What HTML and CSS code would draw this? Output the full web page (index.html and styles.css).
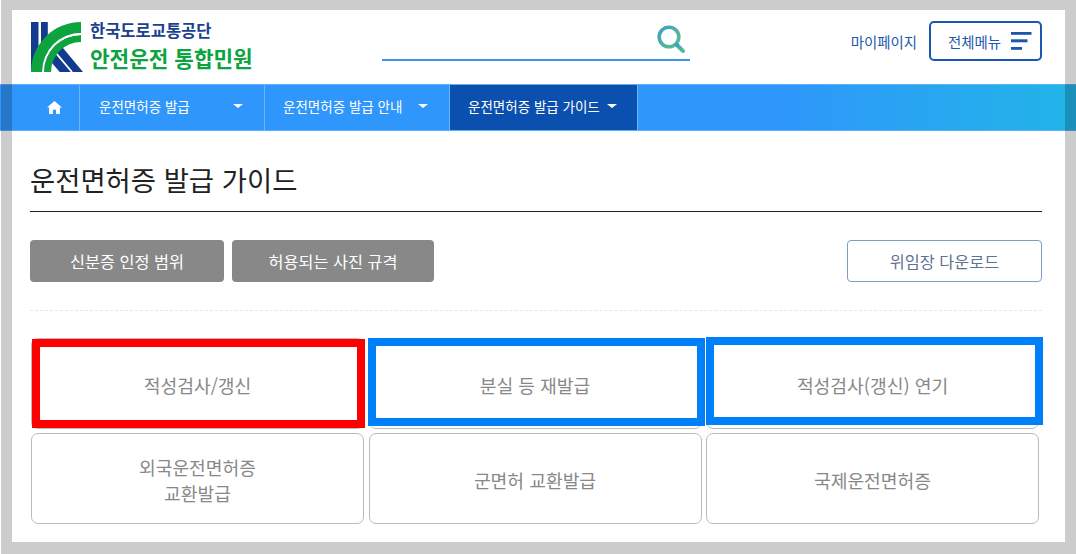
FILE: index.html
```html
<!DOCTYPE html>
<html lang="ko">
<head>
<meta charset="utf-8">
<title>운전면허증 발급 가이드</title>
<link rel="stylesheet" href="styles.css">
</head>
<body>
<div class="page">
  <header class="top">
    <a class="brand">
      <svg class="logo" viewBox="0 0 52 50" width="52" height="50">
        <rect x="0" y="0" width="7.500" height="50" fill="#123a8e"/>
        <rect x="10" y="0" width="6.800" height="50" fill="#123a8e"/>
        <polygon points="15,34 27,20 52,50 28.700,50" fill="#123a8e"/>
        <path d="M22 27.600L41 50" stroke="#fff" stroke-width="1.800" fill="none"/>
        <path d="M0 50A50 50 0 0 1 50 0V11A39 39 0 0 0 11 50Z" fill="#0da33f"/>
        <path d="M13 50A37 37 0 0 1 50 13V20A30 30 0 0 0 20 50Z" fill="#0da33f"/>
        <path d="M11 50A39 39 0 0 1 50 11V13A37 37 0 0 0 13 50Z" fill="#fff"/>
      </svg>
      <span class="brand-text">
        <span class="brand-org">한국도로교통공단</span>
        <span class="brand-svc">안전운전 통합민원</span>
      </span>
    </a>
    <div class="search">
      <svg class="search-icon" viewBox="0 0 28 28" width="28" height="28">
        <defs><linearGradient id="sg" x1="0" y1="0" x2="1" y2="1"><stop offset="0" stop-color="#3f9fc6"/><stop offset="1" stop-color="#58c08c"/></linearGradient></defs>
        <circle cx="12" cy="12" r="9.800" fill="none" stroke="url(#sg)" stroke-width="3.600"/>
        <path d="M19.500 19.500L26 26" stroke="url(#sg)" stroke-width="4" stroke-linecap="round"/>
      </svg>
    </div>
    <div class="util">
      <a class="mypage">마이페이지</a>
      <a class="allmenu">전체메뉴
        <svg class="burger" viewBox="0 0 21 18" width="21" height="18">
          <rect x="0" y="0" width="20.500" height="2.800" fill="#1b57ae"/>
          <rect x="0" y="7.300" width="16.500" height="3" fill="#1b57ae"/>
          <rect x="0" y="15" width="11" height="2.800" fill="#1b57ae"/>
        </svg>
      </a>
    </div>
  </header>

  <nav class="gnb">
    <a class="gnb-home">
      <svg viewBox="0 0 16 14" width="15" height="13"><path d="M8 0L16 7H13.800V14H9.700V9.500H6.300V14H2.200V7H0Z" fill="#fff"/></svg>
    </a>
    <a class="gnb-item gnb-first">운전면허증 발급<i class="caret"></i></a>
    <a class="gnb-item">운전면허증 발급 안내<i class="caret"></i></a>
    <a class="gnb-item is-active">운전면허증 발급 가이드<i class="caret"></i></a>
  </nav>

  <main class="content">
    <h1 class="title">운전면허증 발급 가이드</h1>
    <div class="actions">
      <a class="btn btn-gray btn-id">신분증 인정 범위</a>
      <a class="btn btn-gray btn-photo">허용되는 사진 규격</a>
      <a class="btn btn-line">위임장 다운로드</a>
    </div>
    <div class="cards">
      <a class="card">적성검사/갱신</a>
      <a class="card">분실 등 재발급</a>
      <a class="card">적성검사(갱신) 연기</a>
      <a class="card">외국운전면허증<br>교환발급</a>
      <a class="card">군면허 교환발급</a>
      <a class="card">국제운전면허증</a>
    </div>
  </main>

  <div class="mark mark-red"></div>
  <div class="mark mark-blue-a"></div>
  <div class="mark mark-blue-b"></div>
  <div class="frame"></div>
</div>
</body>
</html>
```

FILE: styles.css
```css
* { box-sizing: border-box; }
html, body { margin: 0; padding: 0; background: #fff; }
body { font-family: "Noto Sans CJK KR", "Noto Sans", sans-serif; color: #222; }
a { color: inherit; text-decoration: none; }

.page { position: relative; width: 1076px; height: 554px; overflow: hidden; background: #fff; }

.top { height: 84px; padding: 22px 34px 0 31px; display: flex; align-items: flex-start; }
.brand { display: flex; gap: 7px; width: 351px; flex: none; }
.logo { display: block; flex: none; }
.brand-text { display: flex; flex-direction: column; }
.brand-org { font-size: 16.500px; line-height: 20px; font-weight: 700; color: #1c3f8f; margin-top: -2px; }
.brand-svc { font-size: 21.300px; line-height: 30px; font-weight: 700; color: #0da33f; margin-top: 3px; }

.search { width: 308px; height: 39px; flex: none; border-bottom: 2px solid #3f97e8; display: flex; justify-content: flex-end; padding: 3px 5px 0 0; }
.search-icon { display: block; }

.util { margin-left: auto; display: flex; align-items: center; gap: 12px; margin-top: -1px; }
.mypage { font-size: 14.400px; color: #1b57ae; }
.allmenu { width: 113px; height: 40px; border: 2px solid #1b57ae; border-radius: 5px; display: flex; align-items: center; justify-content: space-between; padding: 0 8px 0 17px; font-size: 14.400px; color: #1b57ae; }
.burger { display: block; }

.gnb { height: 47px; padding-left: 30px; display: flex; background: linear-gradient(90deg, #2f96fb 0, #2f96fb 72%, #22b5e8 100%); border-top: 1px solid #5bb0fb; border-bottom: 1px solid #5bb0fb; }
.gnb-home { width: 50px; display: flex; align-items: center; justify-content: center; border-right: 1px solid #6bb6fb; }
.gnb-item { width: 185px; padding: 0 21px 3px 18px; display: flex; align-items: center; justify-content: space-between; font-size: 13.500px; color: #fff; border-right: 1px solid #6bb6fb; }
.gnb-first { padding-left: 19px; }
.gnb-item.is-active { width: 188px; background: #0c50af; padding-right: 20px; }
.caret { width: 0; height: 0; border-left: 5px solid transparent; border-right: 5px solid transparent; border-top: 4.500px solid #fff; }

.content { padding: 0 34px 0 30px; }
.title { margin: 0; height: 81px; padding-top: 28px; font-size: 27.400px; line-height: 40px; font-weight: 400; color: #222; border-bottom: 1px solid #222; }
.actions { margin-top: 28px; padding-bottom: 28px; display: flex; gap: 8px; border-bottom: 1px dashed #e6e6e6; }
.btn { height: 42px; display: flex; align-items: center; justify-content: center; border-radius: 4px; font-size: 16.300px; }
.btn-gray { background: #888; color: #fff; }
.btn-id { width: 194px; }
.btn-photo { width: 202px; }
.btn-line { width: 195px; margin-left: auto; background: #fff; border: 1.500px solid #7f9cc6; color: #5f7391; }

.cards { margin: 27px 0 0 1px; display: grid; grid-template-columns: repeat(3, 333px); grid-auto-rows: 91px; column-gap: 4.500px; row-gap: 4px; }
.card { display: flex; align-items: center; justify-content: center; text-align: center; border: 1.500px solid #bbb; border-radius: 7px; font-size: 18.200px; line-height: 26px; color: #888; padding-top: 3px; background: #fff; }

.mark { position: absolute; border: 8px solid #0080f8; }
.mark-red { left: 32px; top: 339px; width: 333px; height: 89px; border-color: #f00; }
.mark-blue-a { left: 368px; top: 338px; width: 337px; height: 88px; }
.mark-blue-b { left: 706px; top: 337px; width: 337px; height: 88px; }

.frame { position: absolute; left: 1px; top: 0; right: 0; bottom: 0; border-style: solid; border-color: rgba(0, 0, 0, 0.2); border-width: 10px 11px 12px 11px; pointer-events: none; }
```
